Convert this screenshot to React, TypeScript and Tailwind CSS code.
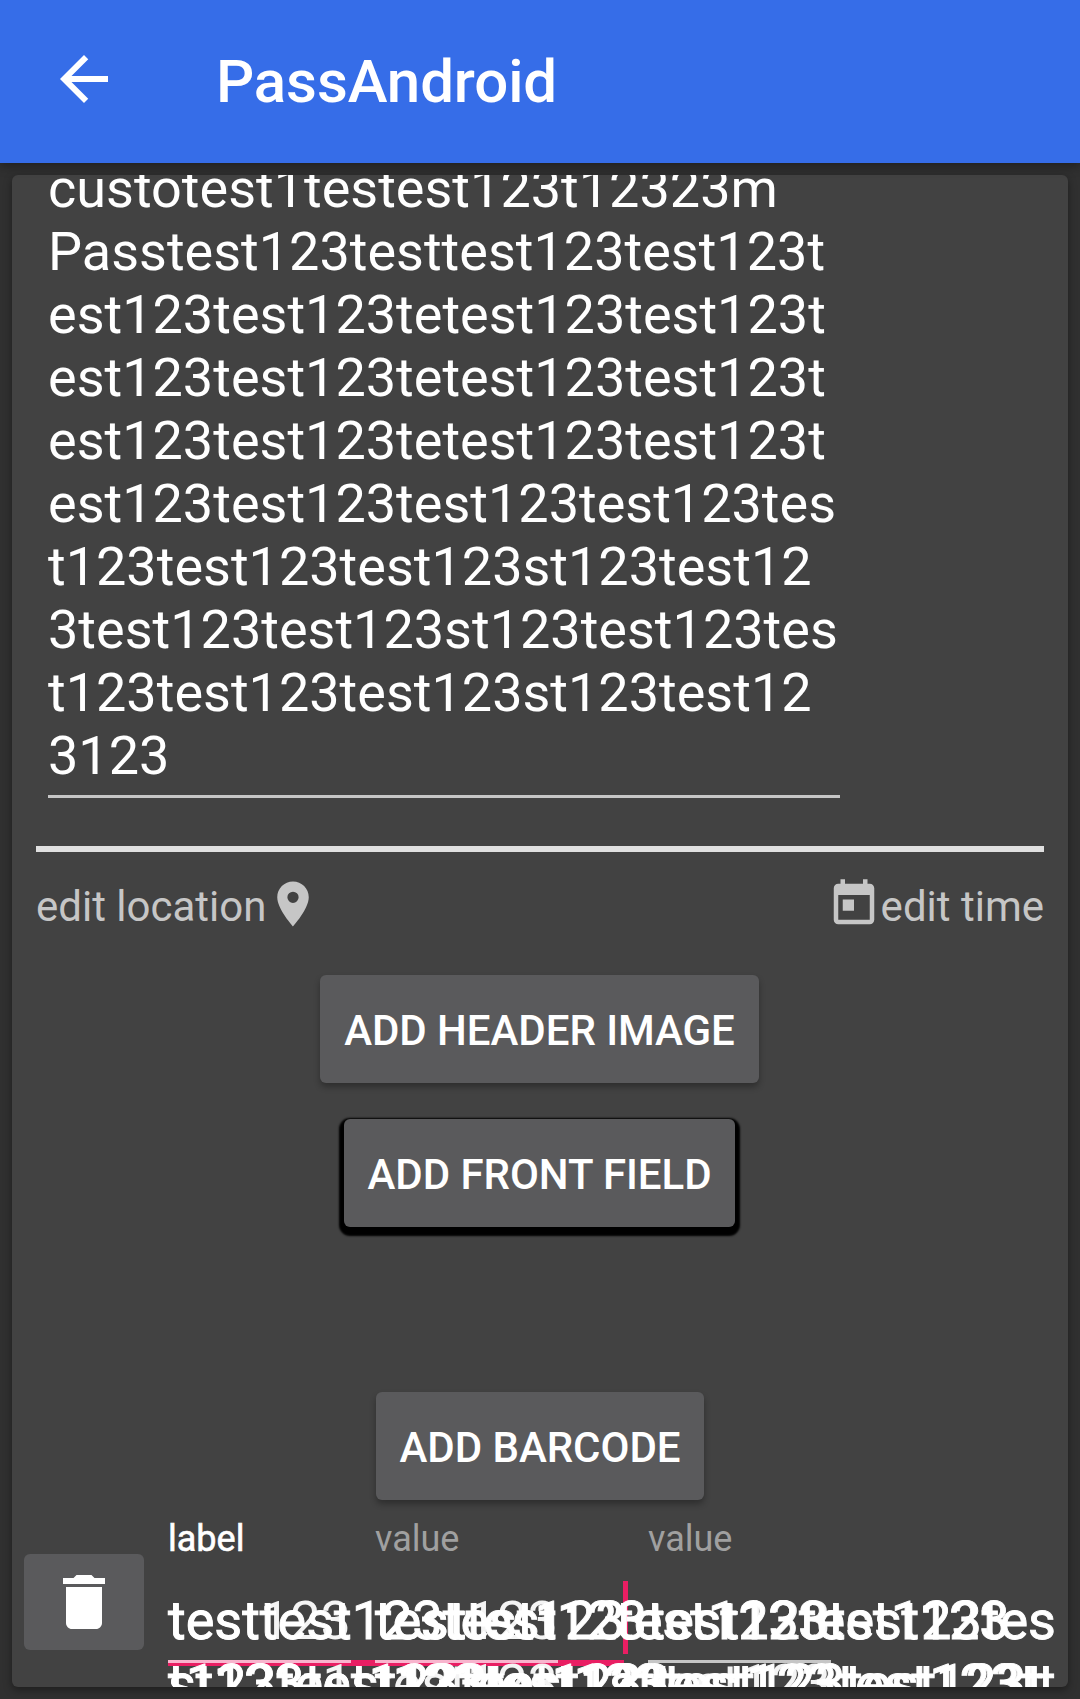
import { MdArrowBack, MdDelete, MdPlace, MdToday } from "react-icons/md";

const titleLines = [
  "custotest1testest123t12323m",
  "Passtest123testtest123test123t",
  "est123test123tetest123test123t",
  "est123test123tetest123test123t",
  "est123test123tetest123test123t",
  "est123test123test123test123tes",
  "t123test123test123st123test12",
  "3test123test123st123test123tes",
  "t123test123test123st123test12",
  "3123",
];

function RaisedButton({ label, focused, className }: { label: string; focused?: boolean; className: string }) {
  return (
    <button
      className={`h-[108px] shrink-0 rounded-[6px] bg-[#5a5a5c] pt-[3px] text-[42px] leading-[49px] font-medium tracking-[-0.05px] whitespace-nowrap text-white ${
        focused
          ? "shadow-[0_4px_2px_5px_#000]"
          : "shadow-[0_4px_6px_rgba(0,0,0,0.3)]"
      } ${className}`}
    >
      {label}
    </button>
  );
}

function FieldText({ lines, className, heavy }: { lines: string[]; className: string; heavy?: boolean }) {
  return (
    <div
      className={`absolute top-[71px] text-[54px] leading-[63px] whitespace-pre ${
        heavy ? "[-webkit-text-stroke:0.9px_#fff]" : "text-[#f4f4f4]"
      } ${className}`}
    >
      {lines.map((line, i) => (
        <div key={i}>{line}</div>
      ))}
    </div>
  );
}

export default function App() {
  return (
    <div className="flex h-[1699px] w-[1080px] flex-col overflow-hidden bg-[#303030] font-['Roboto',sans-serif] text-white">
      <header className="z-10 flex h-[163px] shrink-0 items-center bg-[#366de8] pl-12 shadow-[0_3px_10px_rgba(0,0,0,0.35)]">
        <MdArrowBack className="mb-[5px] size-[72px]" />
        <h1 className="ml-24 text-[60px] leading-[70px] font-medium tracking-[-0.1px]">PassAndroid</h1>
      </header>

      <main className="mx-3 mt-3 flex h-[1512px] shrink-0 flex-col overflow-hidden rounded-[6px] bg-[#424242] shadow-[0_3px_8px_rgba(0,0,0,0.4)]">
        <div className="-mt-[18px] ml-9 h-[641px] w-[792px] shrink-0 border-b-[3px] border-[#c6c6c6] text-[54px] leading-[63px] whitespace-pre">
          {titleLines.map((line, i) => (
            <div key={i}>{line}</div>
          ))}
        </div>
        <div className="mx-6 mt-12 h-[6px] shrink-0 bg-[#e0e0e0]" />

        <div className="mx-6 mt-[25px] flex h-[54px] shrink-0 justify-between text-[42px] leading-[49px] text-[#c6c6c6]">
          <div className="flex">
            <span className="pt-[5px]">edit location</span>
            <MdPlace className="size-[54px]" />
          </div>
          <div className="flex">
            <MdToday className="size-[54px]" />
            <span className="pt-[5px]">edit time</span>
          </div>
        </div>

        <div className="mt-[44px] flex shrink-0 flex-col items-center">
          <RaisedButton label="ADD HEADER IMAGE" className="mr-px w-[439px]" />
          <RaisedButton label="ADD FRONT FIELD" focused className="mt-9 mr-px w-[391px]" />
          <RaisedButton label="ADD BARCODE" className="mt-[165px] w-[328px]" />
        </div>

        <div className="mt-[18px] flex h-[169px] shrink-0">
          <button className="mt-9 ml-3 flex h-24 w-[120px] shrink-0 items-start justify-center rounded-[6px] bg-[#5a5a5c] pt-3">
            <MdDelete className="size-[72px]" />
          </button>
          <div className="relative ml-6 h-[169px] w-[888px]">
            <div className="flex text-4xl leading-[42px] text-[#a0a0a0]">
              <span className="w-[207px] text-white [-webkit-text-stroke:0.6px_#fff]">label</span>
              <span className="w-[273px]">value</span>
              <span>value</span>
            </div>
            <div className="absolute top-[63px] left-[455px] h-[73px] w-[5px] bg-[#e91e63]" />
            <div className="absolute top-[142px] left-0 h-[6px] w-[456px] bg-[#e91e63]" />
            <div className="absolute top-[142px] left-0 h-[3px] w-[183px] bg-[#f8b4cd]" />
            <div className="absolute top-[142px] left-[207px] h-[3px] w-[183px] bg-[#f8b4cd]" />
            <div className="absolute top-[142px] left-[480px] h-[3px] w-[183px] bg-[#c6c6c6]" />
            <FieldText className="left-0" lines={["test123", "st123t1"]} />
            <FieldText className="left-[207px]" lines={["test123", "test123"]} />
            <FieldText className="left-[480px]" lines={["test123", "test123"]} />
            <FieldText heavy className="left-0" lines={["testtest123test123", "t123test123test123"]} />
            <FieldText heavy className="left-0" lines={[" ", "st123test123test123"]} />
            <FieldText heavy className="left-[207px] tracking-[-0.25px]" lines={["testtest123test123test123", "t123test123test123test123t"]} />
            <FieldText heavy className="left-[448px]" lines={["test123test123tes", ""]} />
            <FieldText heavy className="left-[441px]" lines={[" ", "sttest123test123tt"]} />
          </div>
        </div>
      </main>
    </div>
  );
}
